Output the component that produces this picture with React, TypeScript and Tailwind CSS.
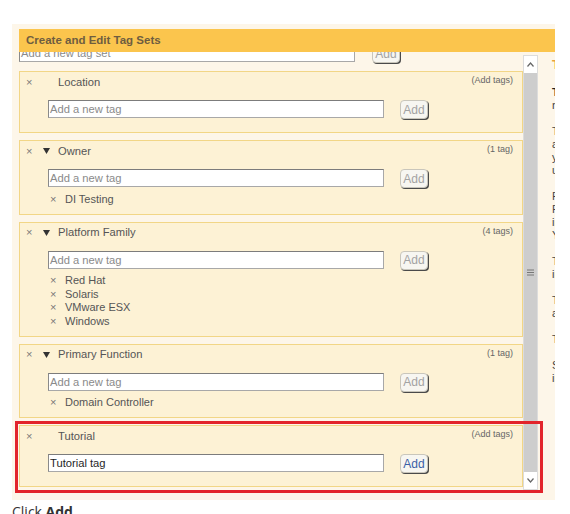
import React from 'react';

type TagSet = {
  name: string;
  count: string;
  expandable: boolean;
  tags: string[];
  value?: string;
};

const tagSets: TagSet[] = [
  { name: 'Location', count: '(Add tags)', expandable: false, tags: [] },
  { name: 'Owner', count: '(1 tag)', expandable: true, tags: ['DI Testing'] },
  {
    name: 'Platform Family',
    count: '(4 tags)',
    expandable: true,
    tags: ['Red Hat', 'Solaris', 'VMware ESX', 'Windows'],
  },
  { name: 'Primary Function', count: '(1 tag)', expandable: true, tags: ['Domain Controller'] },
  { name: 'Tutorial', count: '(Add tags)', expandable: false, tags: [], value: 'Tutorial tag' },
];

const helpText: { lines: string[]; bold?: boolean }[] = [
  { lines: ['Tag sets group', 'names of tags'], bold: true },
  { lines: ['To create a tag set', 'add a name and click', 'your tags to it and', 'use them to filter'] },
  { lines: ['For example, the', 'Platform Family set', 'includes Windows', 'You can add more'] },
  { lines: ['To add a tag, type', 'in the field'] },
  { lines: ['To remove a tag', 'and its values'] },
  { lines: ['Tags are saved'] },
  { lines: ['Select a tag set', 'in the list'] },
];

function AddButton({ active }: { active?: boolean }) {
  return (
    <button
      className={`block h-[19px] w-[28px] rounded-[4px] border border-[#c9c6bb] bg-[#f7f6f1] text-[12px] leading-[16px] shadow-[1px_1px_0_#4a4a4a] ${
        active ? 'text-[#3b5fa6]' : 'text-[#a3a3a3]'
      }`}
    >
      Add
    </button>
  );
}

function TagInput({ placeholder, value, width }: { placeholder: string; value?: string; width: string }) {
  return (
    <div
      className={`${width} h-[18px] border border-[#a8a8a8] border-t-[#7c7c7c] border-l-[#8a8a8a] bg-white pl-[1px] text-[11.2px] leading-[16px] ${
        value ? 'text-[#1f1f1f]' : 'text-[#8a8a8a]'
      }`}
    >
      {value || placeholder}
    </div>
  );
}

function TagSetCard({ set }: { set: TagSet }) {
  return (
    <div
      className={`border border-[#f2d686] bg-[#fdf2d5] ${set.tags.length ? 'pb-[8px]' : 'pb-[14px]'}`}
    >
      <div className="flex h-[20px] items-center pr-[9px]">
        <span className="ml-[6px] w-[10px] text-[11px] leading-none text-[#7a7a7a]">×</span>
        <span className="ml-[7px] flex w-[15px] items-center">
          {set.expandable && (
            <svg width="7" height="6" viewBox="0 0 7 6">
              <path d="M0 0 L7 0 L3.5 6 Z" fill="#333" />
            </svg>
          )}
        </span>
        <span className="text-[11.2px] text-[#555]">{set.name}</span>
        <span className="ml-auto -mt-[2px] text-[9px] text-[#666]">{set.count}</span>
      </div>
      <div className="mt-[8px] flex h-[18px] items-start pl-[28px]">
        <TagInput placeholder="Add a new tag" value={set.value} width="w-[336px]" />
        <div className="ml-[16px] flex">
          <AddButton active={!!set.value} />
        </div>
      </div>
      {set.tags.length > 0 && (
        <ul className="mt-[5px] pl-[30px]">
          {set.tags.map((tag) => (
            <li key={tag} className="flex h-[13.5px] items-center text-[11px] text-[#555]">
              <span className="w-[15px] text-[11px] text-[#777]">×</span>
              {tag}
            </li>
          ))}
        </ul>
      )}
    </div>
  );
}

export default function App() {
  return (
    <div
      className="relative h-[514px] w-[570px] overflow-hidden bg-white pl-[12px] pt-[24px]"
      style={{ fontFamily: '"Liberation Sans", Arial, sans-serif' }}
    >
      <div className="h-[476px] w-[543px] overflow-hidden bg-[#fdf6e9] pl-[7px] pt-[5px]">
        <div className="relative z-10 flex h-[23px] items-center bg-[#fbc54d] pl-[7px] text-[11.5px] font-bold text-[#6e5d40]">
          Create and Edit Tag Sets
        </div>
        <div className="flex">
          {/* scrolled list */}
          <div className="flex h-[438px] w-[519px]">
            <div className="h-full w-[504px] overflow-hidden">
              <div className="-mt-[8px] flex h-[18px] items-start">
                <TagInput placeholder="Add a new tag set" width="w-[336px]" />
                <div className="ml-[17px] flex">
                  <AddButton />
                </div>
              </div>
              <div className="mt-[9px] flex flex-col gap-[7px]">
                {tagSets.map((set) => (
                  <TagSetCard key={set.name} set={set} />
                ))}
              </div>
            </div>
            {/* scrollbar */}
            <div className="mt-[3px] flex h-[435px] w-[15px] flex-col border border-[#dcdcdc] bg-white">
              <div className="flex h-[17px] items-center justify-center">
                <svg width="7" height="5" viewBox="0 0 7 5">
                  <path d="M0.5 4.5 L3.5 1 L6.5 4.5" fill="none" stroke="#666" strokeWidth="1.2" />
                </svg>
              </div>
              <div className="flex flex-1 items-center justify-center bg-[#cdcdcd]">
                <svg width="7" height="7" viewBox="0 0 7 7">
                  <path d="M0 1 H7 M0 3.5 H7 M0 6 H7" stroke="#777" strokeWidth="1" />
                </svg>
              </div>
              <div className="flex h-[17px] items-center justify-center">
                <svg width="7" height="5" viewBox="0 0 7 5">
                  <path d="M0.5 0.5 L3.5 4 L6.5 0.5" fill="none" stroke="#666" strokeWidth="1.2" />
                </svg>
              </div>
            </div>
          </div>
          {/* help panel, cut off at the right */}
          <div className="pl-[14px] pt-[7px] text-[11px] leading-[13px] text-[#444]">
            <div className="mb-[14px] whitespace-nowrap text-[12px] font-bold text-[#e9a23b]">Tag Sets</div>
            {helpText.map((p, i) => (
              <div key={i} className="mb-[13px]">
                {p.lines.map((line, j) => (
                  <div key={j} className={`whitespace-nowrap ${p.bold && j === 0 ? 'font-bold text-[#222]' : ''}`}>
                    {line}
                  </div>
                ))}
              </div>
            ))}
          </div>
        </div>
      </div>
      <div className="mt-[2px] text-[14px] leading-[20px] text-[#333]" style={{ fontFamily: '"Open Sans", sans-serif' }}>
        Click <b>Add</b>
      </div>
      {/* highlight annotation */}
      <div className="pointer-events-none absolute left-[15px] top-[421px] h-[72px] w-[528px] border-[3px] border-[#e2242b]" />
    </div>
  );
}
